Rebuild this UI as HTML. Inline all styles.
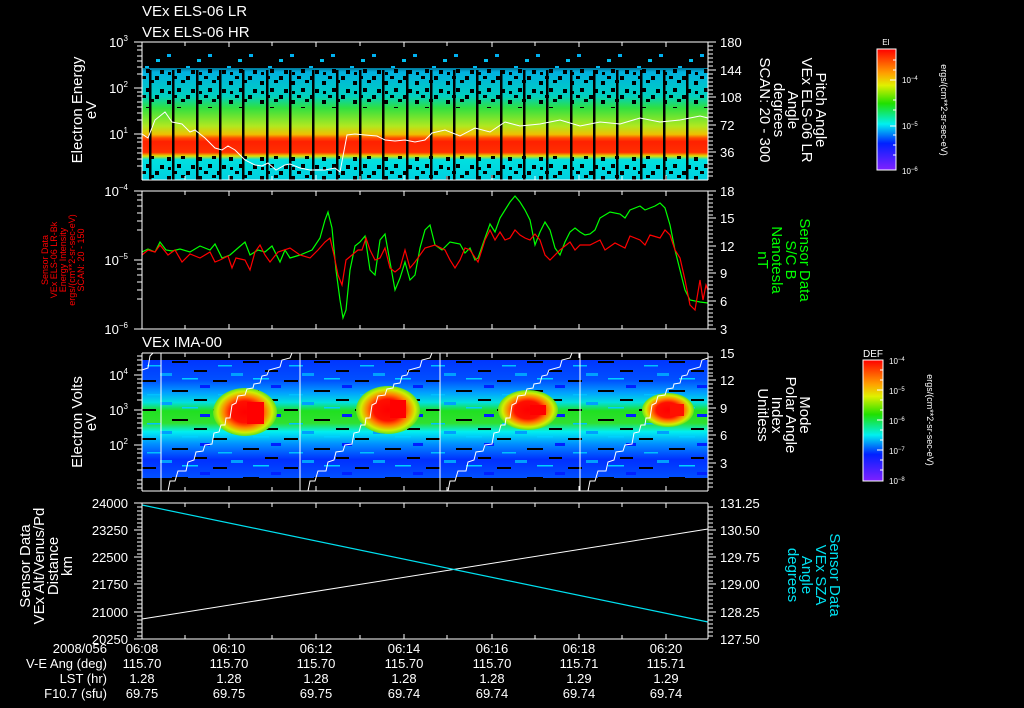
<!DOCTYPE html>
<html><head><meta charset="utf-8"><style>
html,body{margin:0;padding:0;background:#000;width:1024px;height:708px;overflow:hidden}
svg{display:block}
text{font-family:"Liberation Sans",sans-serif;fill:#fff}
</style></head><body>
<svg width="1024" height="708" viewBox="0 0 1024 708" xmlns="http://www.w3.org/2000/svg">
<defs>
<linearGradient id="g1" x1="0" y1="60" x2="0" y2="180" gradientUnits="userSpaceOnUse">
<stop offset="0" stop-color="#000"/>
<stop offset="0.1" stop-color="#00b0e0"/>
<stop offset="0.3" stop-color="#00d0c0"/>
<stop offset="0.4" stop-color="#30e040"/>
<stop offset="0.55" stop-color="#b0e820"/>
<stop offset="0.62" stop-color="#f0c000"/>
<stop offset="0.65" stop-color="#ff5000"/>
<stop offset="0.68" stop-color="#ff2000"/>
<stop offset="0.77" stop-color="#ff3000"/>
<stop offset="0.8" stop-color="#e0e000"/>
<stop offset="0.83" stop-color="#00e0e0"/>
<stop offset="1" stop-color="#00d0e0"/>
</linearGradient>
<pattern id="holes" width="31" height="19" patternUnits="userSpaceOnUse">
<rect x="0" y="0" width="4" height="4" fill="#000"/><rect x="12" y="5" width="4" height="4" fill="#000"/><rect x="22" y="12" width="4" height="4" fill="#000"/><rect x="5" y="13" width="4" height="4" fill="#000"/><rect x="18" y="0" width="4" height="3" fill="#000"/><rect x="26" y="4" width="4" height="3" fill="#000"/><rect x="13" y="15" width="3" height="3" fill="#000"/>
</pattern>
<pattern id="dots" width="41" height="26" patternUnits="userSpaceOnUse">
<rect x="3" y="2" width="4" height="3" fill="#00b0f0"/><rect x="22" y="14" width="4" height="3" fill="#00b8f0"/><rect x="33" y="7" width="4" height="3" fill="#00c0f0"/>
</pattern>
<linearGradient id="g3" x1="0" y1="356" x2="0" y2="478" gradientUnits="userSpaceOnUse">
<stop offset="0" stop-color="#0030ff"/>
<stop offset="0.2" stop-color="#0050ff"/>
<stop offset="0.3" stop-color="#00a0ff"/>
<stop offset="0.38" stop-color="#00e0e0"/>
<stop offset="0.45" stop-color="#20e020"/>
<stop offset="0.55" stop-color="#30e030"/>
<stop offset="0.62" stop-color="#00f0f0"/>
<stop offset="0.72" stop-color="#0090ff"/>
<stop offset="0.85" stop-color="#0030ff"/>
<stop offset="1" stop-color="#0050ff"/>
</linearGradient>
<radialGradient id="hot" cx="0.5" cy="0.5" r="0.5">
<stop offset="0" stop-color="#ff0000"/><stop offset="0.45" stop-color="#ff1000"/><stop offset="0.65" stop-color="#ff8000"/><stop offset="0.85" stop-color="#d0f000"/><stop offset="1" stop-color="#60e020"/>
</radialGradient>
<pattern id="hl" width="71" height="29" patternUnits="userSpaceOnUse">
<rect x="0" y="3" width="14" height="2" fill="#000"/><rect x="30" y="13" width="16" height="2" fill="#000"/><rect x="52" y="22" width="13" height="2" fill="#000"/><rect x="40" y="1" width="16" height="1.5" fill="#00d0ff"/><rect x="5" y="17" width="14" height="1.5" fill="#00c0ff"/><rect x="58" y="8" width="10" height="3" fill="#0020ff"/><rect x="18" y="25" width="12" height="3" fill="#00a0ff"/>
</pattern>
<linearGradient id="cb" x1="0" y1="0" x2="0" y2="1">
<stop offset="0" stop-color="#ff0000"/><stop offset="0.2" stop-color="#ffa000"/><stop offset="0.3" stop-color="#e0f000"/><stop offset="0.45" stop-color="#20e000"/><stop offset="0.62" stop-color="#00f0f0"/><stop offset="0.78" stop-color="#0020ff"/><stop offset="1" stop-color="#8020ff"/>
</linearGradient>
</defs>

<text x="142" y="16" font-size="15">VEx ELS-06 LR</text>
<text x="142" y="37" font-size="15">VEx ELS-06 HR</text>

<!-- PANEL 1 -->
<rect x="142" y="44" width="566" height="30" fill="url(#dots)"/>
<rect x="142" y="68" width="566" height="112" fill="url(#g1)"/>
<rect x="142" y="68" width="566" height="40" fill="url(#holes)"/>
<rect x="142" y="156" width="566" height="24" fill="url(#holes)"/>
<g fill="#000">
<rect x="149" y="70" width="2.5" height="110"/><rect x="172" y="70" width="2.5" height="110"/><rect x="196" y="70" width="2.5" height="110"/><rect x="219" y="70" width="2.5" height="110"/><rect x="242" y="70" width="2.5" height="110"/><rect x="266" y="70" width="2.5" height="110"/><rect x="289" y="70" width="2.5" height="110"/><rect x="312" y="70" width="2.5" height="110"/><rect x="336" y="70" width="2.5" height="110"/><rect x="359" y="70" width="2.5" height="110"/><rect x="382" y="70" width="2.5" height="110"/><rect x="406" y="70" width="2.5" height="110"/><rect x="430" y="70" width="2.5" height="110"/><rect x="453" y="70" width="2.5" height="110"/><rect x="476" y="70" width="2.5" height="110"/><rect x="500" y="70" width="2.5" height="110"/><rect x="523" y="70" width="2.5" height="110"/><rect x="546" y="70" width="2.5" height="110"/><rect x="570" y="70" width="2.5" height="110"/><rect x="593" y="70" width="2.5" height="110"/><rect x="616" y="70" width="2.5" height="110"/><rect x="640" y="70" width="2.5" height="110"/><rect x="663" y="70" width="2.5" height="110"/><rect x="686" y="70" width="2.5" height="110"/>
</g>
<polyline fill="none" stroke="#fff" stroke-width="1" points="142,134 148,138 155,120 165,112 172,122 182,124 190,132 195,130 205,138 215,148 222,150 228,146 235,150 245,160 255,165 262,166 268,163 276,170 285,165 290,164 300,168 310,170 325,170 335,168 340,172 347,135 355,134 365,135 377,136 385,140 395,141 405,140 415,142 425,140 432,133 445,130 460,136 475,128 490,132 505,122 520,126 540,124 560,120 580,126 600,122 620,124 640,118 660,122 680,120 700,116 708,118"/>

<!-- PANEL 2 -->
<polyline fill="none" stroke="#00ff00" stroke-width="1.2" points="142,252 148,249 155,252 160,242 166,250 172,251 180,249 190,252 200,246 210,250 215,244 222,258 230,255 238,248 245,242 250,255 258,250 265,252 272,246 280,262 285,250 290,258 300,255 312,250 320,238 325,220 328,212 332,228 336,270 340,300 343,318 346,310 350,270 355,246 360,242 365,236 370,270 375,275 380,240 385,234 390,262 395,290 400,278 405,262 410,280 415,275 420,248 425,230 430,225 435,245 442,250 450,242 460,244 465,253 470,248 475,260 478,258 485,238 490,224 495,232 500,218 505,210 510,202 515,196 520,202 525,210 530,220 535,245 540,232 545,222 550,230 555,248 560,255 565,242 570,232 575,228 580,232 585,235 590,234 595,230 600,218 610,212 620,214 625,218 630,210 640,206 645,210 650,208 655,206 660,203 665,208 670,225 675,250 680,270 685,290 690,300 700,302 708,303"/>
<polyline fill="none" stroke="#ff0000" stroke-width="1.2" points="142,255 148,250 155,252 160,245 168,255 175,250 182,262 190,254 200,258 210,252 215,262 220,260 228,256 232,268 236,258 245,260 250,270 255,252 260,245 265,255 270,262 278,252 290,248 300,255 310,258 318,250 325,242 330,238 334,255 338,275 342,285 346,260 352,255 358,250 362,250 366,238 370,250 375,260 380,258 385,248 390,268 395,272 400,268 405,250 410,268 415,262 425,248 435,245 445,250 450,260 455,268 460,260 465,248 470,250 478,262 485,240 490,230 495,240 500,232 505,240 510,238 515,230 520,235 525,238 530,240 535,234 540,240 545,255 550,260 560,250 570,242 575,250 580,245 590,245 600,240 605,250 615,243 625,248 630,236 640,240 645,245 650,235 660,238 665,230 670,235 675,250 680,258 685,280 690,305 695,310 700,280 703,300 706,285 708,290"/>

<!-- PANEL 3 -->
<text x="142" y="347" font-size="15">VEx IMA-00</text>
<rect x="142" y="360" width="566" height="118" fill="url(#g3)"/>
<rect x="142" y="360" width="566" height="118" fill="url(#hl)"/>
<g>
<ellipse cx="245" cy="412" rx="32" ry="24" fill="url(#hot)"/>
<ellipse cx="388" cy="410" rx="32" ry="24" fill="url(#hot)"/>
<ellipse cx="528" cy="410" rx="30" ry="20" fill="url(#hot)"/>
<ellipse cx="668" cy="410" rx="26" ry="17" fill="url(#hot)"/>
<rect x="247" y="402" width="17" height="22" fill="#ff0000"/>
<rect x="390" y="400" width="16" height="18" fill="#ff0000"/>
<rect x="530" y="405" width="16" height="10" fill="#ff0000"/>
<rect x="670" y="404" width="14" height="12" fill="#ff1000"/>
</g>
<g stroke="#fff" stroke-width="1">
<line x1="161" y1="353" x2="161" y2="491"/><line x1="300" y1="353" x2="300" y2="491"/><line x1="440" y1="353" x2="440" y2="491"/><line x1="580" y1="353" x2="580" y2="491"/>
</g>
<g fill="none" stroke="#fff" stroke-width="1">
<polyline points="142,370 148,368 150,356 153,353"/>
<polyline points="168,491 170,481 175,481 178,471 186,471 188,462 194,460 196,452 203,451 205,445 212,444 214,433 219,432 221,425 225,425 226,418 230,418 232,405 236,403 238,396 245,395 247,389 253,388 254,384 260,383 262,376 267,375 269,370 280,367 282,360 290,358 292,353"/>
<polyline points="308,491 310,481 315,481 318,471 326,471 328,462 334,460 336,452 343,451 345,445 352,444 354,433 359,432 361,425 365,425 366,418 370,418 372,405 376,403 378,396 385,395 387,389 393,388 394,384 400,383 402,376 407,375 409,370 420,367 422,360 430,358 432,353"/>
<polyline points="448,491 450,481 455,481 458,471 466,471 468,462 474,460 476,452 483,451 485,445 492,444 494,433 499,432 501,425 505,425 506,418 510,418 512,405 516,403 518,396 525,395 527,389 533,388 534,384 540,383 542,376 547,375 549,370 560,367 562,360 570,358 572,353"/>
<polyline points="588,491 590,481 595,481 598,471 606,471 608,462 614,460 616,452 623,451 625,445 632,444 634,433 639,432 641,425 645,425 646,418 650,418 652,405 656,403 658,396 665,395 667,389 673,388 674,384 680,383 682,376 687,375 689,370 700,367 702,360 708,358"/>
</g>

<!-- PANEL 4 -->
<line x1="142" y1="619" x2="708" y2="529" stroke="#fff" stroke-width="1"/>
<line x1="142" y1="505" x2="708" y2="622" stroke="#00e0f0" stroke-width="1.2"/>

<g fill="none" stroke="#fff" stroke-width="1">
<path d="M142,42H708M142,180H708M142,191H708M142,329H708M142,353H708M142,491H708M142,503H708M142,639H708"/>
<path d="M142,42V180M708,42V180M142,191V329M708,191V329M142,353V491M708,353V491M142,503V639M708,503V639"/>
<path d="M185,42v4M229,42v5M272,42v4M316,42v5M360,42v4M404,42v5M447,42v4M492,42v5M535,42v4M579,42v5M622,42v4M666,42v5M185,180v-4M229,180v-5M272,180v-4M316,180v-5M360,180v-4M404,180v-5M447,180v-4M492,180v-5M535,180v-4M579,180v-5M622,180v-4M666,180v-5"/>
<path d="M185,191v4M229,191v5M272,191v4M316,191v5M360,191v4M404,191v5M447,191v4M492,191v5M535,191v4M579,191v5M622,191v4M666,191v5M185,329v-4M229,329v-5M272,329v-4M316,329v-5M360,329v-4M404,329v-5M447,329v-4M492,329v-5M535,329v-4M579,329v-5M622,329v-4M666,329v-5"/>
<path d="M185,353v4M229,353v5M272,353v4M316,353v5M360,353v4M404,353v5M447,353v4M492,353v5M535,353v4M579,353v5M622,353v4M666,353v5M185,491v-4M229,491v-5M272,491v-4M316,491v-5M360,491v-4M404,491v-5M447,491v-4M492,491v-5M535,491v-4M579,491v-5M622,491v-4M666,491v-5"/>
<path d="M185,503v4M229,503v5M272,503v4M316,503v5M360,503v4M404,503v5M447,503v4M492,503v5M535,503v4M579,503v5M622,503v4M666,503v5M185,639v-4M229,639v-5M272,639v-4M316,639v-5M360,639v-4M404,639v-5M447,639v-4M492,639v-5M535,639v-4M579,639v-5M622,639v-4M666,639v-5"/>
<path d="M134,42h8M134,88h8M134,134h8M134,191h8M134,260h8M134,329h8M134,375h8M134,410h8M134,445h8M134,503h8M134,530h8M134,557h8M134,584h8M134,612h8M134,639h8"/>
<path d="M708,42h8M708,70h8M708,97h8M708,125h8M708,152h8M708,191h8M708,218h8M708,246h8M708,273h8M708,301h8M708,329h8M708,380h8M708,408h8M708,435h8M708,463h8M708,530h8M708,557h8M708,584h8M708,612h8"/>
</g>
<g stroke="#fff" stroke-width="1">
<path d="M708,46h5M708,50h5M708,54h5M708,58h5M708,62h5M708,66h5M708,74h5M708,78h5M708,82h5M708,86h5M708,90h5M708,94h5M708,101h5M708,105h5M708,109h5M708,113h5M708,117h5M708,121h5M708,129h5M708,133h5M708,137h5M708,141h5M708,145h5M708,149h5M708,156h5M708,160h5M708,164h5M708,168h5M708,172h5M708,176h5"/>
<path d="M708,195h5M708,199h5M708,203h5M708,207h5M708,211h5M708,215h5M708,222h5M708,226h5M708,230h5M708,234h5M708,238h5M708,242h5M708,250h5M708,254h5M708,258h5M708,262h5M708,266h5M708,270h5M708,277h5M708,281h5M708,285h5M708,289h5M708,293h5M708,297h5M708,305h5M708,309h5M708,313h5M708,317h5M708,321h5M708,325h5"/>
<path d="M708,357h5M708,361h5M708,365h5M708,369h5M708,373h5M708,376h5M708,384h5M708,388h5M708,392h5M708,396h5M708,400h5M708,404h5M708,412h5M708,416h5M708,420h5M708,424h5M708,428h5M708,431h5M708,439h5M708,443h5M708,447h5M708,451h5M708,455h5M708,459h5M708,467h5M708,471h5M708,475h5M708,479h5M708,483h5M708,487h5"/>
<path d="M708,507h5M708,511h5M708,515h5M708,519h5M708,523h5M708,527h5M708,534h5M708,538h5M708,542h5M708,546h5M708,550h5M708,554h5M708,561h5M708,565h5M708,569h5M708,573h5M708,577h5M708,581h5M708,588h5M708,592h5M708,596h5M708,600h5M708,604h5M708,608h5M708,616h5M708,620h5M708,624h5M708,628h5M708,632h5M708,636h5"/>
<path d="M137,46h5M137,50h5M137,56h5M137,61h5M137,67h5M137,74h5M137,92h5M137,96h5M137,102h5M137,107h5M137,113h5M137,120h5M137,138h5M137,142h5M137,148h5M137,153h5M137,159h5M137,166h5"/>
<path d="M137,195h5M137,200h5M137,206h5M137,213h5M137,221h5M137,230h5M137,264h5M137,269h5M137,275h5M137,282h5M137,290h5M137,299h5"/>
<path d="M137,356h5M137,360h5M137,365h5M137,370h5M137,379h5M137,383h5M137,388h5M137,393h5M137,400h5M137,414h5M137,418h5M137,423h5M137,428h5M137,435h5M137,449h5M137,453h5M137,458h5M137,463h5M137,470h5M137,480h5M137,484h5M137,488h5"/>
<path d="M137,507h5M137,511h5M137,515h5M137,519h5M137,523h5M137,527h5M137,534h5M137,538h5M137,542h5M137,546h5M137,550h5M137,554h5M137,561h5M137,565h5M137,569h5M137,573h5M137,577h5M137,581h5M137,588h5M137,592h5M137,596h5M137,600h5M137,604h5M137,608h5M137,616h5M137,620h5M137,624h5M137,628h5M137,632h5M137,636h5"/>
</g>

<g font-size="13" text-anchor="end">
<text x="128" y="47">10<tspan font-size="8" dy="-6">3</tspan></text>
<text x="128" y="93">10<tspan font-size="8" dy="-6">2</tspan></text>
<text x="128" y="139">10<tspan font-size="8" dy="-6">1</tspan></text>
<text x="128" y="196">10<tspan font-size="8" dy="-6">−4</tspan></text>
<text x="128" y="265">10<tspan font-size="8" dy="-6">−5</tspan></text>
<text x="128" y="334">10<tspan font-size="8" dy="-6">−6</tspan></text>
<text x="128" y="380">10<tspan font-size="8" dy="-6">4</tspan></text>
<text x="128" y="415">10<tspan font-size="8" dy="-6">3</tspan></text>
<text x="128" y="450">10<tspan font-size="8" dy="-6">2</tspan></text>
<text x="128" y="508">24000</text><text x="128" y="535">23250</text><text x="128" y="562">22500</text><text x="128" y="589">21750</text><text x="128" y="617">21000</text><text x="128" y="644">20250</text>
</g>
<g font-size="13">
<text x="720" y="47">180</text><text x="720" y="75">144</text><text x="720" y="102">108</text><text x="720" y="130">72</text><text x="720" y="157">36</text>
<text x="720" y="196">18</text><text x="720" y="223">15</text><text x="720" y="251">12</text><text x="720" y="278">9</text><text x="720" y="306">6</text><text x="720" y="334">3</text>
<text x="720" y="358">15</text><text x="720" y="385">12</text><text x="720" y="413">9</text><text x="720" y="440">6</text><text x="720" y="468">3</text>
<text x="720" y="508">131.25</text><text x="720" y="535">130.50</text><text x="720" y="562">129.75</text><text x="720" y="589">129.00</text><text x="720" y="617">128.25</text><text x="720" y="644">127.50</text>
</g>

<g font-size="15" text-anchor="middle">
<text transform="translate(82,110) rotate(-90)">Electron Energy</text>
<text transform="translate(96,110) rotate(-90)">eV</text>
<text transform="translate(82,422) rotate(-90)">Electron Volts</text>
<text transform="translate(96,422) rotate(-90)">eV</text>
<text transform="translate(30,566) rotate(-90)">Sensor Data</text>
<text transform="translate(44,566) rotate(-90)">VEx Alt/Venus/Pd</text>
<text transform="translate(58,566) rotate(-90)">Distance</text>
<text transform="translate(72,566) rotate(-90)">km</text>
</g>
<g font-size="9" text-anchor="middle">
<text transform="translate(48,260) rotate(-90)" style="fill:#ff0000">Sensor Data</text>
<text transform="translate(57,260) rotate(-90)" style="fill:#ff0000">VEx ELS-06 LR-Bk</text>
<text transform="translate(66,260) rotate(-90)" style="fill:#ff0000">Energy Intensity</text>
<text transform="translate(75,260) rotate(-90)" style="fill:#ff0000">ergs/(cm**2-sr-sec-eV)</text>
<text transform="translate(84,260) rotate(-90)" style="fill:#ff0000">SCAN: 20 - 150</text>
</g>

<g font-size="15" text-anchor="middle">
<text transform="translate(816,110) rotate(90)">Pitch Angle</text>
<text transform="translate(802,110) rotate(90)">VEx ELS-06 LR</text>
<text transform="translate(788,110) rotate(90)">Angle</text>
<text transform="translate(774,110) rotate(90)">degrees</text>
<text transform="translate(760,110) rotate(90)">SCAN: 20 - 300</text>
<text transform="translate(800,260) rotate(90)" style="fill:#00ff00">Sensor Data</text>
<text transform="translate(786,260) rotate(90)" style="fill:#00ff00">S/C B</text>
<text transform="translate(772,260) rotate(90)" style="fill:#00ff00">Nanotesla</text>
<text transform="translate(758,260) rotate(90)" style="fill:#00ff00">nT</text>
<text transform="translate(800,415) rotate(90)">Mode</text>
<text transform="translate(786,415) rotate(90)">Polar Angle</text>
<text transform="translate(772,415) rotate(90)">Index</text>
<text transform="translate(758,415) rotate(90)">Unitless</text>
<text transform="translate(830,575) rotate(90)" style="fill:#00e0f0">Sensor Data</text>
<text transform="translate(816,575) rotate(90)" style="fill:#00e0f0">VEx SZA</text>
<text transform="translate(802,575) rotate(90)" style="fill:#00e0f0">Angle</text>
<text transform="translate(788,575) rotate(90)" style="fill:#00e0f0">degrees</text>
</g>

<rect x="877" y="49" width="19" height="121" fill="url(#cb)" stroke="#fff" stroke-width="1"/>
<text x="886" y="45" font-size="8" text-anchor="middle">EI</text>
<g stroke="#fff"><path d="M890,80h6M893,60h3M893,70h3M890,126h6M893,100h3M893,110h3M893,135h3M893,145h3M893,155h3"/></g>
<g font-size="8"><text x="902" y="83">10<tspan font-size="6" dy="-3">−4</tspan></text><text x="902" y="129">10<tspan font-size="6" dy="-3">−5</tspan></text><text x="902" y="174">10<tspan font-size="6" dy="-3">−6</tspan></text></g>
<text transform="translate(941,110) rotate(90)" font-size="9" text-anchor="middle">ergs/(cm**2-sr-sec-eV)</text>

<rect x="863" y="360" width="20" height="121" fill="url(#cb)" stroke="#fff" stroke-width="1"/>
<text x="873" y="357" font-size="10" text-anchor="middle">DEF</text>
<g stroke="#fff"><path d="M877,390h6M877,420h6M877,450h6M880,370h3M880,380h3M880,400h3M880,410h3M880,430h3M880,440h3M880,460h3M880,470h3"/></g>
<g font-size="8"><text x="889" y="364">10<tspan font-size="6" dy="-3">−4</tspan></text><text x="889" y="394">10<tspan font-size="6" dy="-3">−5</tspan></text><text x="889" y="424">10<tspan font-size="6" dy="-3">−6</tspan></text><text x="889" y="454">10<tspan font-size="6" dy="-3">−7</tspan></text><text x="889" y="484">10<tspan font-size="6" dy="-3">−8</tspan></text></g>
<text transform="translate(927,420) rotate(90)" font-size="9" text-anchor="middle">ergs/(cm**2-sr-sec-eV)</text>

<g font-size="13" text-anchor="end">
<text x="107" y="653">2008/056</text>
<text x="107" y="668">V-E Ang (deg)</text>
<text x="107" y="683">LST (hr)</text>
<text x="107" y="698">F10.7 (sfu)</text>
</g>
<g font-size="13" text-anchor="middle">
<text x="142" y="653">06:08</text><text x="229" y="653">06:10</text><text x="316" y="653">06:12</text><text x="404" y="653">06:14</text><text x="492" y="653">06:16</text><text x="579" y="653">06:18</text><text x="666" y="653">06:20</text>
<text x="142" y="668">115.70</text><text x="229" y="668">115.70</text><text x="316" y="668">115.70</text><text x="404" y="668">115.70</text><text x="492" y="668">115.70</text><text x="579" y="668">115.71</text><text x="666" y="668">115.71</text>
<text x="142" y="683">1.28</text><text x="229" y="683">1.28</text><text x="316" y="683">1.28</text><text x="404" y="683">1.28</text><text x="492" y="683">1.28</text><text x="579" y="683">1.29</text><text x="666" y="683">1.29</text>
<text x="142" y="698">69.75</text><text x="229" y="698">69.75</text><text x="316" y="698">69.75</text><text x="404" y="698">69.74</text><text x="492" y="698">69.74</text><text x="579" y="698">69.74</text><text x="666" y="698">69.74</text>
</g>
</svg>
</body></html>
